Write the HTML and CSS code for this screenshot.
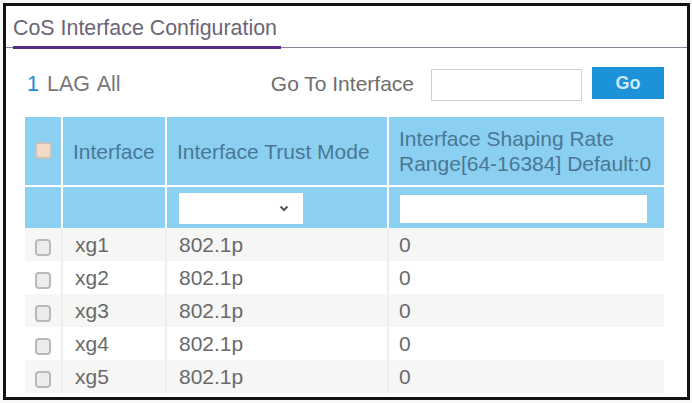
FILE: index.html
```html
<!DOCTYPE html>
<html lang="en">
<head>
<meta charset="utf-8">
<title>CoS Interface Configuration</title>
<link rel="stylesheet" href="styles.css">
</head>
<body>
<div class="frame">
  <div class="tabbar">
    <div class="tab">CoS Interface Configuration</div>
  </div>

  <div class="content">
    <div class="toolbar">
      <div class="filter-links"><span class="link">1</span> LAG All</div>
      <div class="goto">
        <span class="goto-label">Go To Interface</span>
        <input class="goto-input" type="text">
        <button class="btn-go" type="button">Go</button>
      </div>
    </div>

    <table class="grid">
      <colgroup>
        <col class="c-check">
        <col class="c-intf">
        <col class="c-trust">
        <col class="c-rate">
      </colgroup>
      <thead>
        <tr class="head">
          <th><span class="cb cb-head"></span></th>
          <th>Interface</th>
          <th>Interface Trust Mode</th>
          <th>Interface Shaping Rate<br>Range[64-16384] Default:0</th>
        </tr>
        <tr class="edit">
          <th></th>
          <th></th>
          <th>
            <div class="select">
              <svg class="chev" width="10" height="7" viewBox="0 0 10 7"><path d="M1.5 1.5 L5 5 L8.5 1.5" fill="none" stroke="#555" stroke-width="2"/></svg>
            </div>
          </th>
          <th><div class="text-box"></div></th>
        </tr>
      </thead>
      <tbody>
        <tr><td><span class="cb"></span></td><td>xg1</td><td>802.1p</td><td>0</td></tr>
        <tr><td><span class="cb"></span></td><td>xg2</td><td>802.1p</td><td>0</td></tr>
        <tr><td><span class="cb"></span></td><td>xg3</td><td>802.1p</td><td>0</td></tr>
        <tr><td><span class="cb"></span></td><td>xg4</td><td>802.1p</td><td>0</td></tr>
        <tr><td><span class="cb"></span></td><td>xg5</td><td>802.1p</td><td>0</td></tr>
      </tbody>
    </table>
  </div>
</div>
</body>
</html>
```

FILE: styles.css
```css
html, body {
  margin: 0;
  padding: 0;
  background: #f7f7f7;
}

body {
  font-family: "Liberation Sans", Arial, sans-serif;
  font-size: 21px;
  color: #6b6b6b;
}

.frame {
  margin: 3px 0 0 3px;
  width: 681px;
  height: 391px;
  border: 3px solid #121212;
  background: #fff;
  overflow: hidden;
}

/* page title with purple tab underline */
.tabbar {
  display: flex;
  padding: 9px 0 0 7px;
  border-bottom: 1px solid #8c8496;
}

.tab {
  color: #6c6576;
  font-size: 21.4px;
  line-height: 26px;
  padding: 0 4px 5px 0;
  border-bottom: 3px solid #5a2c88;
  margin-bottom: -2px;
}

.content {
  padding: 0 23px 0 19px;
}

/* toolbar: filter links + go to interface */
.toolbar {
  display: flex;
  justify-content: space-between;
  align-items: center;
  height: 36px;
  margin-top: 18px;
  padding-left: 2px;
}

.filter-links {
  color: #777;
  font-size: 21.5px;
  word-spacing: 2px;
}

.link {
  color: #1a8bd0;
}

.goto {
  display: flex;
  align-items: center;
}

.goto-label {
  color: #6e6e6e;
}

.goto-input {
  box-sizing: border-box;
  width: 151px;
  height: 32px;
  margin: 2px 0 0 17px;
  border: 1px solid #cfcfcf;
  background: #fff;
  outline: none;
}

.btn-go {
  box-sizing: border-box;
  width: 72px;
  height: 32px;
  margin-left: 10px;
  margin-top: -2px;
  border: 0;
  background: #1c92d8;
  color: #cfe9f8;
  font-family: inherit;
  font-size: 18px;
  font-weight: bold;
}

/* interface grid */
.grid {
  margin-top: 15px;
  width: 639px;
  table-layout: fixed;
  border-collapse: separate;
  border-spacing: 0;
}

.c-check { width: 36px; }
.c-intf { width: 104px; }
.c-trust { width: 222px; }
.c-rate { width: 277px; }

.grid th,
.grid td {
  padding: 0 0 0 10px;
  text-align: left;
  white-space: nowrap;
  overflow: hidden;
}

.grid th + th,
.grid td + td {
  border-left: 2px solid #fff;
}

.grid th:first-child,
.grid td:first-child {
  padding: 0;
  text-align: center;
}

.head th {
  height: 68px;
  background: #8bd0f0;
  color: #4a7795;
  font-weight: normal;
  line-height: 25px;
  vertical-align: middle;
}

.edit th {
  height: 41px;
  background: #8bd0f0;
  border-top: 2px solid #fff;
  vertical-align: middle;
}

.select {
  box-sizing: border-box;
  width: 124px;
  height: 31px;
  margin: 2px 0 0 2px;
  background: #fff;
  display: flex;
  align-items: center;
  justify-content: flex-end;
  padding-right: 14px;
}

.text-box {
  box-sizing: border-box;
  width: 247px;
  height: 28px;
  margin: 2px 0 0 1px;
  background: #fff;
}

.grid tbody td {
  height: 33px;
  color: #6a6a6a;
  line-height: 24px;
}

.grid tbody td:nth-child(2),
.grid tbody td:nth-child(3) {
  padding-left: 12px;
}

.grid tbody td + td {
  border-left: 2px solid #eeeeee;
}

.grid tbody tr:nth-child(odd) td {
  background: #f6f6f5;
}

.grid tbody tr:nth-child(even) td {
  background: #fff;
}

/* checkbox squares */
.cb {
  display: inline-block;
  box-sizing: border-box;
  width: 16px;
  height: 17px;
  margin-top: 3px;
  border: 2px solid #b9b9b9;
  border-radius: 4px;
  background: #ececec;
  vertical-align: middle;
}

.cb-head {
  width: 17px;
  margin-top: -4px;
  background: #f3dcc6;
  border-color: #c9c3be;
}
```
